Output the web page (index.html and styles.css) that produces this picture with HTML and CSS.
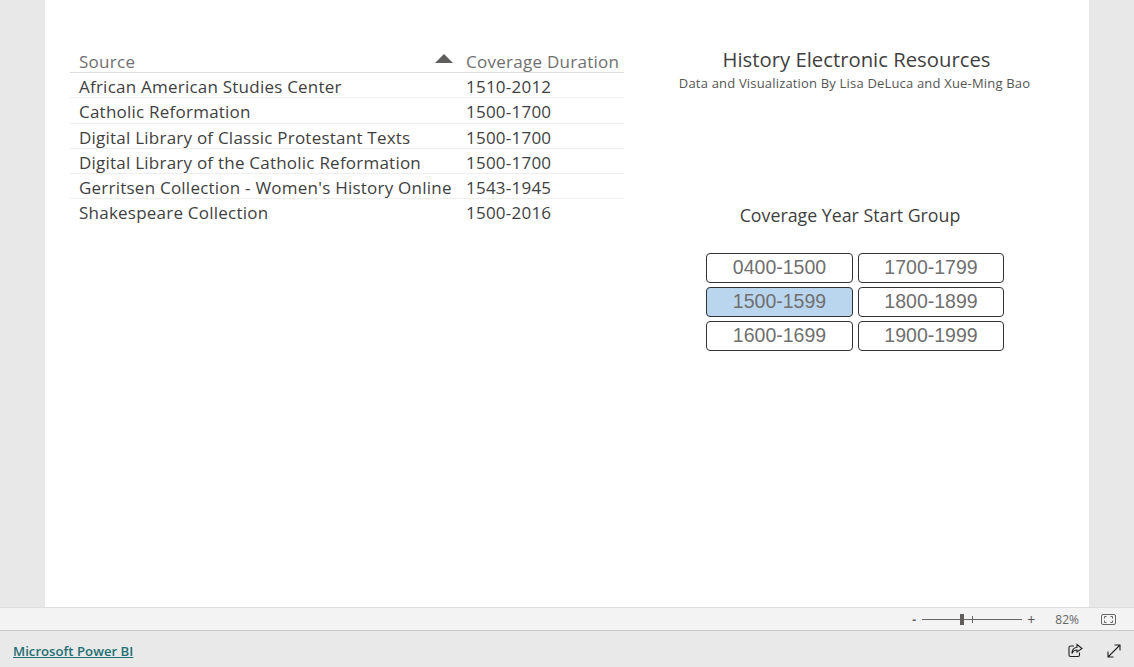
FILE: index.html
```html
<!DOCTYPE html>
<html>
  <head>
    <meta name="viewport" content="width=device-width, initial-scale=1.0" />
    <title>History Electronic Resources</title>
    <link rel="stylesheet" href="styles.css">
  </head>

  <body>
    <div class="report-area">
      <div class="report-page">
        <div class="table-panel">
          <div class="table-row table-head">
            <div class="col-source">Source<span class="sort-arrow"></span></div>
            <div class="col-duration">Coverage Duration</div>
          </div>
          <div class="table-row">
            <div class="col-source">African American Studies Center</div>
            <div class="col-duration">1510-2012</div>
          </div>
          <div class="table-row">
            <div class="col-source">Catholic Reformation</div>
            <div class="col-duration">1500-1700</div>
          </div>
          <div class="table-row">
            <div class="col-source">Digital Library of Classic Protestant Texts</div>
            <div class="col-duration">1500-1700</div>
          </div>
          <div class="table-row">
            <div class="col-source">Digital Library of the Catholic Reformation</div>
            <div class="col-duration">1500-1700</div>
          </div>
          <div class="table-row">
            <div class="col-source">Gerritsen Collection - Women's History Online</div>
            <div class="col-duration">1543-1945</div>
          </div>
          <div class="table-row last-row">
            <div class="col-source">Shakespeare Collection</div>
            <div class="col-duration">1500-2016</div>
          </div>
        </div>

        <div class="side-panel">
          <div class="report-title">History Electronic Resources</div>
          <div class="report-subtitle">Data and Visualization By Lisa DeLuca and Xue-Ming Bao</div>
          <div class="slicer-title">Coverage Year Start Group</div>
          <div class="slicer-grid">
            <div class="slicer-btn">0400-1500</div>
            <div class="slicer-btn selected">1500-1599</div>
            <div class="slicer-btn">1600-1699</div>
            <div class="slicer-btn">1700-1799</div>
            <div class="slicer-btn">1800-1899</div>
            <div class="slicer-btn">1900-1999</div>
          </div>
        </div>
      </div>
    </div>

    <div class="status-bar">
      <span class="zoom-sign">-</span>
      <div class="zoom-track">
        <span class="zoom-thumb"></span>
        <span class="zoom-tick"></span>
      </div>
      <span class="zoom-sign plus">+</span>
      <span class="zoom-value">82%</span>
      <svg class="fit-icon" width="15" height="11" viewBox="0 0 15 11" fill="none" stroke="#666">
        <rect x="0.5" y="0.5" width="14" height="10" rx="1.5" />
        <path d="M3.5 4.5V2.5H5.5M9.5 2.5H11.5V4.5M11.5 6.5V8.5H9.5M5.5 8.5H3.5V6.5" />
      </svg>
    </div>

    <div class="footer-bar">
      <a class="brand-link" href="#">Microsoft Power BI</a>
      <div class="footer-icons">
        <svg width="15" height="15" viewBox="0 0 15 15" fill="none" stroke="#222" stroke-width="1.1">
          <path d="M6 3H2.5A1.5 1.5 0 0 0 1 4.500V12A1.500 1.500 0 0 0 2.500 13.500H10A1.500 1.500 0 0 0 11.500 12V9.500" />
          <path d="M9 1.500L14 5.500L9 9V7C6.500 7 5 8 4 10.500C4 7 6 4.500 9 4.200Z" />
        </svg>
        <svg width="14" height="14" viewBox="0 0 14 14" fill="none" stroke="#222" stroke-width="1.1">
          <path d="M1 13L13 1M7.500 1H13V6.500M1 7.500V13H6.500" />
        </svg>
      </div>
    </div>
  </body>
</html>
```

FILE: styles.css
```css
* {
  box-sizing: border-box;
}

html,
body {
  height: 100%;
}

body {
  margin: 0;
  display: flex;
  flex-direction: column;
  background-color: #e9e9e9;
  font-family: "Open Sans", "Noto Sans", "Liberation Sans", sans-serif;
  overflow: hidden;
}

/*grey strip either side of the white report page:*/
.report-area {
  height: 607px;
  padding: 0 45px;
  background-color: #e8e8e8;
}

.report-page {
  display: flex;
  height: 100%;
  width: 1044px;
  background-color: white;
}

.table-panel {
  width: 554px;
  margin-left: 25px;
  padding-top: 48px;
}

.table-row {
  display: flex;
  height: 25.3px;
  padding-left: 9px;
  border-bottom: 1px solid #eeeeee;
  font-size: 17px;
  line-height: 27px;
  letter-spacing: 0.23px;
  color: #3f3f3f;
  white-space: nowrap;
}

.table-head {
  height: 25px;
  border-bottom-color: #dedede;
  letter-spacing: 0.27px;
  color: #707070;
}

.last-row {
  border-bottom: none;
}

.col-source {
  position: relative;
  width: 387px;
}

/*sort arrow sits over the end of the header cell:*/
.sort-arrow {
  position: absolute;
  right: 13px;
  top: 6px;
  width: 0;
  height: 0;
  border-left: 9px solid transparent;
  border-right: 9px solid transparent;
  border-bottom: 9px solid #605e5c;
}

.side-panel {
  display: flex;
  flex-direction: column;
  align-items: center;
  width: 452px;
  padding-top: 45px;
}

.report-title {
  padding-left: 13px;
  font-size: 20.3px;
  line-height: 29px;
  color: #3f3f3f;
}

.report-subtitle {
  padding-left: 9px;
  font-size: 13px;
  line-height: 18px;
  letter-spacing: 0.18px;
  color: #555555;
}

.slicer-title {
  margin-top: 111px;
  font-size: 17.8px;
  line-height: 24px;
  color: #3f3f3f;
}

.slicer-grid {
  display: grid;
  grid-template-rows: repeat(3, 30px);
  grid-template-columns: 147px 146px;
  grid-auto-flow: column;
  column-gap: 5px;
  row-gap: 4px;
  margin-top: 26px;
  margin-left: 10px;
}

.slicer-btn {
  border: 1px solid #333333;
  border-radius: 4px;
  background-color: white;
  font-family: "Liberation Sans", Arial, sans-serif;
  font-size: 19.5px;
  line-height: 27px;
  text-align: center;
  color: #707070;
}

.slicer-btn.selected {
  background-color: #bad5ee;
}

.status-bar {
  display: flex;
  align-items: center;
  justify-content: flex-end;
  height: 24px;
  padding-right: 18px;
  border-top: 1px solid #dddddd;
  border-bottom: 1px solid #c8c8c8;
  background-color: #f3f3f3;
  font-size: 12px;
  color: #666666;
}

.zoom-sign {
  width: 5px;
  font-weight: bold;
}

.zoom-sign.plus {
  width: 9px;
  font-weight: normal;
  font-size: 14px;
  color: #555555;
}

.zoom-track {
  position: relative;
  width: 100px;
  height: 1px;
  margin: 0 5px 0 5px;
  background-color: #666666;
}

.zoom-thumb {
  position: absolute;
  left: 38px;
  top: -5px;
  width: 4px;
  height: 11px;
  background-color: #605e5c;
}

.zoom-tick {
  position: absolute;
  left: 50px;
  top: -3px;
  width: 1px;
  height: 7px;
  background-color: #666666;
}

.zoom-value {
  margin-left: 19px;
}

.fit-icon {
  margin-left: 22px;
}

.footer-bar {
  display: flex;
  flex: 1;
  align-items: center;
  justify-content: space-between;
  padding: 3px 13px 0 13px;
}

.brand-link {
  font-size: 13.2px;
  font-weight: 600;
  color: #1f6f73;
  text-decoration: underline;
}

.footer-icons {
  display: flex;
  align-items: center;
  gap: 24px;
}
```
